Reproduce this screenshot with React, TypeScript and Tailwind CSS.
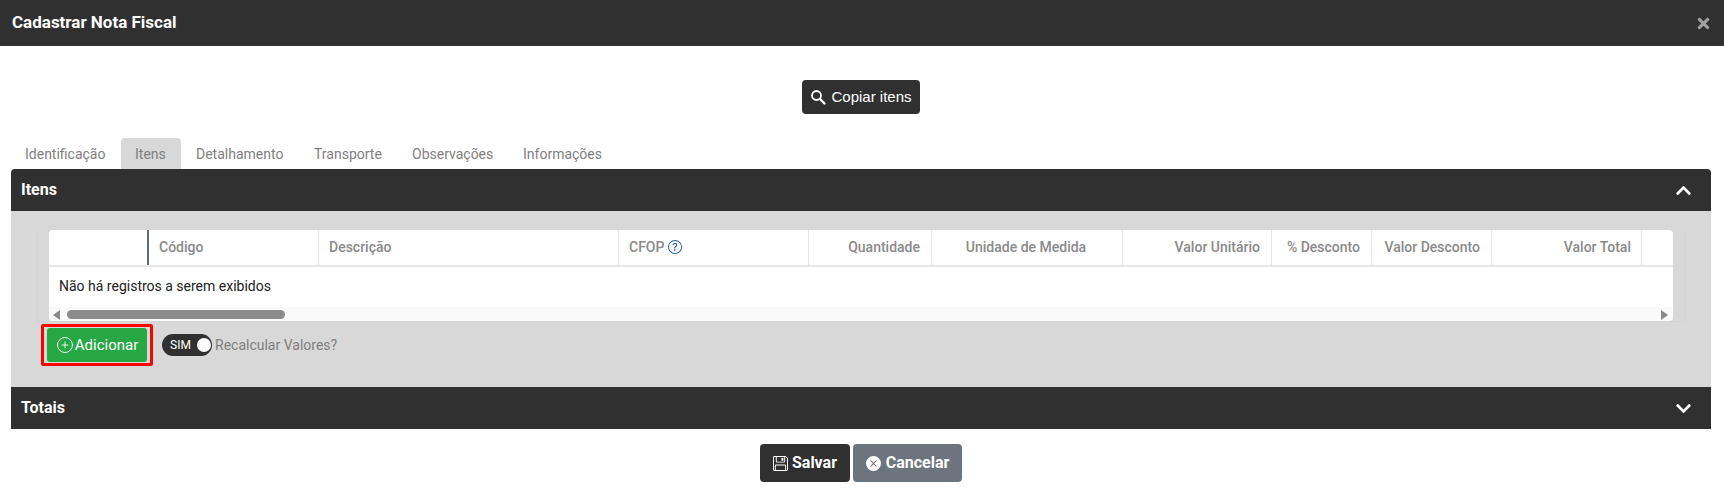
import { BsFloppy, BsQuestionCircle, BsXCircleFill } from "react-icons/bs";
import { FaChevronDown, FaChevronUp, FaTimes } from "react-icons/fa";
import { CirclePlus } from "lucide-react";

const tabs = [
  { label: "Identificação", w: "w-[110px]", pl: "pl-[14px]" },
  { label: "Itens", w: "w-[60px]", pl: "pl-[14px]", active: true },
  { label: "Detalhamento", w: "w-[118px]", pl: "pl-[15px]" },
  { label: "Transporte", w: "w-[99px]", pl: "pl-[15px]" },
  { label: "Observações", w: "w-[110px]", pl: "pl-[14px]" },
  { label: "Informações", w: "w-[100px]", pl: "pl-[15px]" },
];

const columns = [
  { label: "Código", w: "w-[170px]", align: "pl-[10px] justify-start" },
  { label: "Descrição", w: "w-[300px]", align: "pl-[10px] justify-start" },
  { label: "CFOP", w: "w-[190px]", align: "pl-[10px] justify-start", help: true },
  { label: "Quantidade", w: "w-[123px]", align: "pr-[11px] justify-end" },
  { label: "Unidade de Medida", w: "w-[191px]", align: "justify-center pr-[2px]" },
  { label: "Valor Unitário", w: "w-[149px]", align: "pr-[11px] justify-end" },
  { label: "% Desconto", w: "w-[100px]", align: "pr-[11px] justify-end" },
  { label: "Valor Desconto", w: "w-[120px]", align: "pr-[11px] justify-end" },
  { label: "Valor Total", w: "w-[150px]", align: "pr-[10px] justify-end" },
];

function PanelHeader({ title, open }: { title: string; open?: boolean }) {
  return (
    <div className={`flex h-[42px] items-center justify-between bg-[#303030] pl-[10px] pr-[19px] ${open ? "rounded-t-[4px]" : ""}`}>
      <span className="text-[16px] font-bold text-white">{title}</span>
      {open ? <FaChevronUp className="text-[17px] text-white" /> : <FaChevronDown className="text-[17px] text-white" />}
    </div>
  );
}

export default function App() {
  return (
    <div className="h-[495px] w-[1724px] overflow-hidden bg-white font-['Roboto',sans-serif]">
      {/* Modal title */}
      <div className="flex h-[46px] items-center justify-between bg-[#303030] pl-[12px] pr-[12px]">
        <span className="text-[17px] font-bold text-white">Cadastrar Nota Fiscal</span>
        <FaTimes className="text-[17px] text-[#a0a0a0]" />
      </div>

      <div className="flex justify-center pr-[2px] pt-[34px]">
        <button className="flex h-[34px] w-[118px] items-center justify-center gap-[5px] rounded-[4px] bg-[#303030] font-['Liberation_Sans',sans-serif] text-[15px] text-white">
          <svg width="16" height="16" viewBox="0 0 16 16" fill="none" stroke="currentColor">
            <circle cx="6.5" cy="6.5" r="4.5" strokeWidth="1.8" />
            <path d="M10 10l4.5 4.5" strokeWidth="2.4" strokeLinecap="round" />
          </svg>
          Copiar itens
        </button>
      </div>

      <div className="mt-[24px] flex h-[31px] pl-[11px]">
        {tabs.map((t) => (
          <div
            key={t.label}
            className={`flex items-center pt-[2px] text-[14px] text-[#808080] ${t.w} ${t.pl} ${t.active ? "rounded-t-[4px] bg-[#d8d8d8]" : ""}`}
          >
            {t.label}
          </div>
        ))}
      </div>

      <div className="mx-[11px] w-[1700px]">
        <PanelHeader title="Itens" open />
        <div className="h-[176px] bg-[#d8d8d8] pl-[26px] pt-[19px]">
          <div className="h-[92px] w-[1648px] border-b border-l border-r border-[#d0d3d8] pl-[11px] pr-[11px]">
            <div className="h-full overflow-hidden rounded-[4px] bg-white">
              <div className="flex h-[37px] border-b-2 border-[#e4e6ea]">
                <div className="w-[100px] border-r-2 border-[#5a6a80]" />
                {columns.map((c) => (
                  <div
                    key={c.label}
                    className={`flex items-center gap-[4px] border-r border-[#e4e6ea] pb-[1px] text-[14px] font-medium text-[#8a8a8a] ${c.w} ${c.align}`}
                  >
                    {c.label}
                    {c.help && <BsQuestionCircle className="text-[14px] text-[#1f5ea8]" />}
                  </div>
                ))}
              </div>
              <div className="flex h-[40px] items-center pb-[2px] pl-[10px] text-[14px] text-[#222222]">
                Não há registros a serem exibidos
              </div>
              <div className="flex h-[15px] items-center justify-between bg-[#fafafa] pl-[4px] pr-[5px]">
                <div className="flex items-center gap-[7px]">
                  <svg width="7" height="10" viewBox="0 0 7 10">
                    <path d="M7 0v10L0 5z" fill="#8a8a8a" />
                  </svg>
                  <div className="h-[9px] w-[218px] rounded-full bg-[#8c8c8c]" />
                </div>
                <svg width="7" height="10" viewBox="0 0 7 10">
                  <path d="M0 0v10l7-5z" fill="#8a8a8a" />
                </svg>
              </div>
            </div>
          </div>

          <div className="flex items-center pl-[4px] pt-[2px]">
            <div className="rounded-[2px] border-[3px] border-[#ff0000] px-[3px] py-[1px]">
              <button className="flex h-[34px] w-[100px] items-center justify-center gap-[1px] rounded-[3px] bg-[#28a745] text-[15px] text-white">
                <CirclePlus size={18} strokeWidth={1.2} />
                Adicionar
              </button>
            </div>
            <div className="ml-[9px] flex h-[22px] w-[50px] items-center justify-between rounded-full bg-[#303030] pl-[8px] pr-[1px] text-[12px] text-white">
              SIM
              <span className="h-[14px] w-[14px] rounded-full bg-white" />
            </div>
            <span className="ml-[3px] text-[14px] text-[#808080]">Recalcular Valores?</span>
          </div>
        </div>
        <PanelHeader title="Totais" />
      </div>

      <div className="flex justify-center gap-[3px] pr-[2px] pt-[15px]">
        <button className="flex h-[38px] w-[90px] items-center justify-center gap-[4px] rounded-[4px] bg-[#303030] text-[16px] font-bold text-white">
          <BsFloppy className="text-[15px]" />
          Salvar
        </button>
        <button className="flex h-[38px] w-[109px] items-center justify-center gap-[5px] rounded-[4px] bg-[#6c757d] text-[16px] font-bold text-white">
          <BsXCircleFill className="text-[15px]" />
          Cancelar
        </button>
      </div>
    </div>
  );
}
